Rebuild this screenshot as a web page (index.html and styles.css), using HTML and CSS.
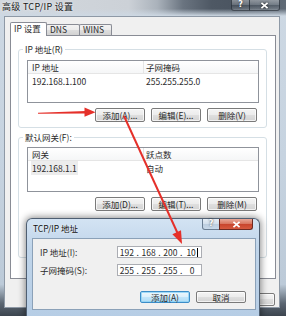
FILE: index.html
```html
<!DOCTYPE html>
<html lang="zh-CN">
<head>
<meta charset="utf-8">
<title>高级 TCP/IP 设置</title>
<link rel="stylesheet" href="styles.css">
</head>
<body>
<div class="win">
  <div class="titlebar">
    <span class="wtitle">高级 TCP/IP 设置</span>
    <div class="wcaps">
      <span class="wcap whelp">?</span>
      <span class="wcap wclose"><svg viewBox="0 0 10 8" width="9" height="7"><path d="M1.5 1 L8.5 7 M8.5 1 L1.5 7"/></svg></span>
    </div>
  </div>
  <div class="client">
    <div class="tabs">
      <div class="tab sel">IP 设置</div>
      <div class="tab t2">DNS</div>
      <div class="tab t3">WINS</div>
    </div>
    <div class="panel">
      <fieldset class="group">
        <legend>IP 地址(R)</legend>
        <div class="gbody g1">
          <div class="list l1">
            <div class="lhead"><span class="c1">IP 地址</span><span class="c2">子网掩码</span></div>
            <div class="lrow"><span class="c1">192.168.1.100</span><span class="c2">255.255.255.0</span></div>
          </div>
          <div class="btns">
            <span class="btn">添加(A)...</span>
            <span class="btn">编辑(E)...</span>
            <span class="btn">删除(V)</span>
          </div>
        </div>
      </fieldset>
      <fieldset class="group gw">
        <legend>默认网关(F):</legend>
        <div class="gbody g2">
          <div class="list l2">
            <div class="lhead"><span class="c1">网关</span><span class="c2">跃点数</span></div>
            <div class="lrow"><span class="c1"><span class="selcell">192.168.1.1</span></span><span class="c2">自动</span></div>
          </div>
          <div class="btns">
            <span class="btn">添加(D)...</span>
            <span class="btn">编辑(T)...</span>
            <span class="btn">删除(M)</span>
          </div>
        </div>
      </fieldset>
    </div>
    <div class="mainbtns">
      <span class="btn mb">确定</span>
      <span class="btn mb">取消</span>
    </div>
  </div>
</div>

<div class="dlg">
  <div class="dtitle">
    <span class="dtext">TCP/IP 地址</span>
    <div class="dcaps">
      <span class="dcap dhelp">?</span>
      <span class="dcap dclose"><svg viewBox="0 0 10 8" width="9" height="7"><path d="M1.5 1 L8.5 7 M8.5 1 L1.5 7"/></svg></span>
    </div>
  </div>
  <div class="dclient">
    <div class="form">
      <span class="flabel">IP 地址(I):</span>
      <div class="ip"><span class="f">192</span><span class="d">.</span><span class="f">168</span><span class="d">.</span><span class="f">200</span><span class="d">.</span><span class="f">10<span class="caret"></span></span></div>
      <span class="flabel">子网掩码(S):</span>
      <div class="ip"><span class="f">255</span><span class="d">.</span><span class="f">255</span><span class="d">.</span><span class="f">255</span><span class="d">.</span><span class="f">0</span></div>
    </div>
    <div class="dbtns">
      <span class="btn db def">添加(A)</span>
      <span class="btn db">取消</span>
    </div>
  </div>
</div>

<svg class="arrows" width="286" height="316" viewBox="0 0 286 316">
  <polygon points="38,112.7 86,110.9 86,113.5 38,113.7" fill="#e5302a"/>
  <polygon points="95.5,112.2 84.5,107.6 84.5,116.8" fill="#e5302a"/>
  <line x1="124" y1="116" x2="177.5" y2="233" stroke="#e5302a" stroke-width="2"/>
  <polygon points="182,244 181,230.2 172.4,234.2" fill="#e5302a"/>
</svg>
</body>
</html>
```

FILE: styles.css
```css
* { box-sizing: border-box; }
html, body { margin: 0; padding: 0; }
body {
  width: 286px;
  height: 316px;
  overflow: hidden;
  position: relative;
  background: #3a424c;
  font-family: "Noto Sans CJK SC", "Noto Sans", sans-serif;
  font-size: 8.5px;
  line-height: 10px;
  color: #2a2a2a;
}

/* main window */
.win {
  width: 286px;
  height: 316px;
  display: flex;
  flex-direction: column;
  background: linear-gradient(to bottom, #cdd8e3 0%, #c6d3e0 50%, #bccad8 90%, #5b6672 96%, #3c454f 100%);
}
.titlebar {
  height: 16px;
  flex: none;
  display: flex;
  justify-content: space-between;
  align-items: flex-start;
  background:
    linear-gradient(to bottom, rgba(205,216,227,0) 55%, #cdd8e3 100%),
    linear-gradient(to right, #d3d8de 0%, #ccd1d7 45%, #aab2bb 55%, #6a7480 64%, #4e5864 74%, #4b5561 82%, #5f6a76 100%);
}
.wtitle {
  padding: 2px 0 0 2px;
  font-size: 9px;
  line-height: 10px;
  letter-spacing: 0.3px;
  color: #1a1a1a;
  text-shadow: 0 0 3px rgba(255,255,255,0.9);
}
.wcaps { display: flex; margin-right: 6px; }
.wcap {
  height: 11px;
  display: flex;
  align-items: center;
  justify-content: center;
  border: 1px solid rgba(40,48,58,0.75);
  border-top: none;
  background: linear-gradient(rgba(255,255,255,0.35), rgba(255,255,255,0.15) 50%, rgba(0,0,0,0.08) 50%, rgba(255,255,255,0.18));
  color: #fff;
  font-family: "DejaVu Sans", sans-serif;
  font-weight: bold;
  font-size: 8px;
  text-shadow: 0 0 2px #222;
}
.whelp { width: 19px; border-radius: 0 0 0 3px; }
.wclose { width: 31px; margin-left: -1px; border-radius: 0 0 3px 0; }
.wcap svg path, .dcap svg path { stroke: #fff; stroke-width: 2; fill: none; }
.wcap svg { filter: drop-shadow(0 0 1px #222); }

.client {
  height: 292px;
  flex: none;
  margin: 0 6px 0 4px;
  border: 1px solid #8e99a6;
  background: #f0f0f0;
  padding: 5px 3px 0 5px;
  display: flex;
  flex-direction: column;
}

/* tabs */
.tabs {
  height: 13px;
  display: flex;
  align-items: flex-end;
}
.tab {
  height: 11px;
  border: 1px solid #898c95;
  border-bottom: none;
  margin-left: -1px;
  padding-left: 3px;
  line-height: 9px;
  background: linear-gradient(#f3f3f3, #ebebeb 50%, #dedede 50%, #d2d2d2);
  border-radius: 2px 2px 0 0;
}
.tab.sel {
  position: relative;
  z-index: 1;
  width: 37px;
  height: 14px;
  margin-left: 0;
  margin-bottom: -1px;
  background: #fff;
  line-height: 11px;
}
.t2 { width: 34px; }
.t3 { width: 33px; }

.panel {
  border: 1px solid #898c95;
  background: #fff;
  padding: 8px 8px 20px 7px;
}

/* group boxes */
.group {
  margin: 0;
  padding: 0;
  border: 1px solid #d5dfe5;
  border-radius: 3px;
  min-width: 0;
}
.group legend {
  margin-left: 4px;
  padding: 0 2px;
  line-height: 10px;
  height: 10px;
}
.gw { margin-top: 4px; }
.gbody { padding: 0 7px 5px 8px; }
.g2 { padding-bottom: 46px; }

.list {
  border: 1px solid #8f939b;
  background: #fff;
}
.l1 { margin-top: 6px; height: 43px; }
.l2 { margin-top: 5px; height: 45px; }
.lhead {
  display: flex;
  align-items: center;
  height: 13px;
  border-bottom: 1px solid #e5e5e5;
  background: linear-gradient(#ffffff, #f5f6f7);
}
.lrow {
  display: flex;
  align-items: center;
  height: 13px;
}
.c1 {
  width: 116px;
  padding-left: 4px;
  border-right: 1px solid transparent;
}
.lhead .c1 { border-right-color: #e5e5e5; height: 12px; line-height: 12px; }
.c2 { padding-left: 2px; }
.selcell { background: #ececec; padding: 1px 1px; margin-left: -1px; }

/* buttons */
.btns {
  display: flex;
  justify-content: flex-end;
  gap: 6px;
  margin-top: 5px;
  padding-right: 2px;
}
.btn {
  width: 50px;
  height: 14px;
  display: flex;
  align-items: center;
  justify-content: center;
  border: 1px solid #7a7a7a;
  border-radius: 2px;
  background: linear-gradient(#f4f4f4 0%, #ececec 48%, #dfdfdf 50%, #d3d3d3 100%);
  box-shadow: inset 0 0 0 1px rgba(255,255,255,0.7);
  white-space: nowrap;
}
.mainbtns {
  display: flex;
  justify-content: flex-end;
  gap: 6px;
  margin-top: 14px;
  margin-right: 1px;
}
.mb { width: 51px; height: 13px; }

/* TCP/IP dialog */
.dlg {
  position: absolute;
  left: 26px;
  top: 218px;
  width: 234px;
  height: 100px;
  border: 1px solid #4f5f72;
  border-bottom: none;
  border-radius: 6px 6px 0 0;
  background: linear-gradient(#d3e3f3, #c0d5ea 30%, #b6cde5 100%);
  box-shadow: 0 0 7px 1px rgba(0,0,0,0.45);
  display: flex;
  flex-direction: column;
}
.dtitle {
  height: 19px;
  flex: none;
  display: flex;
  justify-content: space-between;
  align-items: flex-start;
  padding-left: 6px;
}
.dtext {
  margin-top: 4px;
  line-height: 10px;
  color: #111;
  text-shadow: 0 0 3px rgba(255,255,255,0.9);
}
.dcaps { display: flex; margin-right: 6px; }
.dcap {
  height: 11px;
  display: flex;
  align-items: center;
  justify-content: center;
  border-top: none;
  font-family: "DejaVu Sans", sans-serif;
  font-weight: bold;
  font-size: 8px;
  color: #fff;
  text-shadow: 0 0 2px #333;
}
.dhelp {
  width: 18px;
  border: 1px solid #6a7d92;
  border-top: none;
  border-radius: 0 0 0 3px;
  background: linear-gradient(#e6eef6, #d2dfec 50%, #bccdde 50%, #c9d9ea);
}
.dclose {
  width: 34px;
  margin-left: -1px;
  border: 1px solid #6e2a22;
  border-top: none;
  border-radius: 0 0 3px 0;
  background: linear-gradient(#e9a99a, #d8765f 48%, #c7432c 50%, #d65a3f 100%);
}
.dclient {
  height: 72px;
  flex: none;
  margin: 0 3px 0 5px;
  border: 1px solid #8ba1b8;
  background: #f0f0f0;
  padding: 7px 9px 0 7px;
}
.form {
  display: grid;
  grid-template-columns: 77px 85px;
  row-gap: 6px;
  align-items: center;
}
.ip {
  height: 12px;
  border: 1px solid #abadb3;
  background: #fff;
  display: flex;
  align-items: center;
}
.ip .f { flex: 1; text-align: center; }
.ip .d { width: 4px; text-align: center; }
.caret {
  display: inline-block;
  width: 1px;
  height: 9px;
  background: #000;
  vertical-align: -1px;
  margin-left: 1px;
}
.dbtns {
  display: flex;
  justify-content: flex-end;
  gap: 6px;
  margin-top: 15px;
}
.db { height: 12px; }
.def {
  border-color: #3c8dc8;
  background: linear-gradient(#edf7fd, #dcf0fb 48%, #c3e6fa 50%, #b0dcf5 100%);
  box-shadow: inset 0 0 0 1px rgba(140,210,245,0.8);
}

/* red annotation arrows */
.arrows {
  position: absolute;
  left: 0;
  top: 0;
  pointer-events: none;
}
```
